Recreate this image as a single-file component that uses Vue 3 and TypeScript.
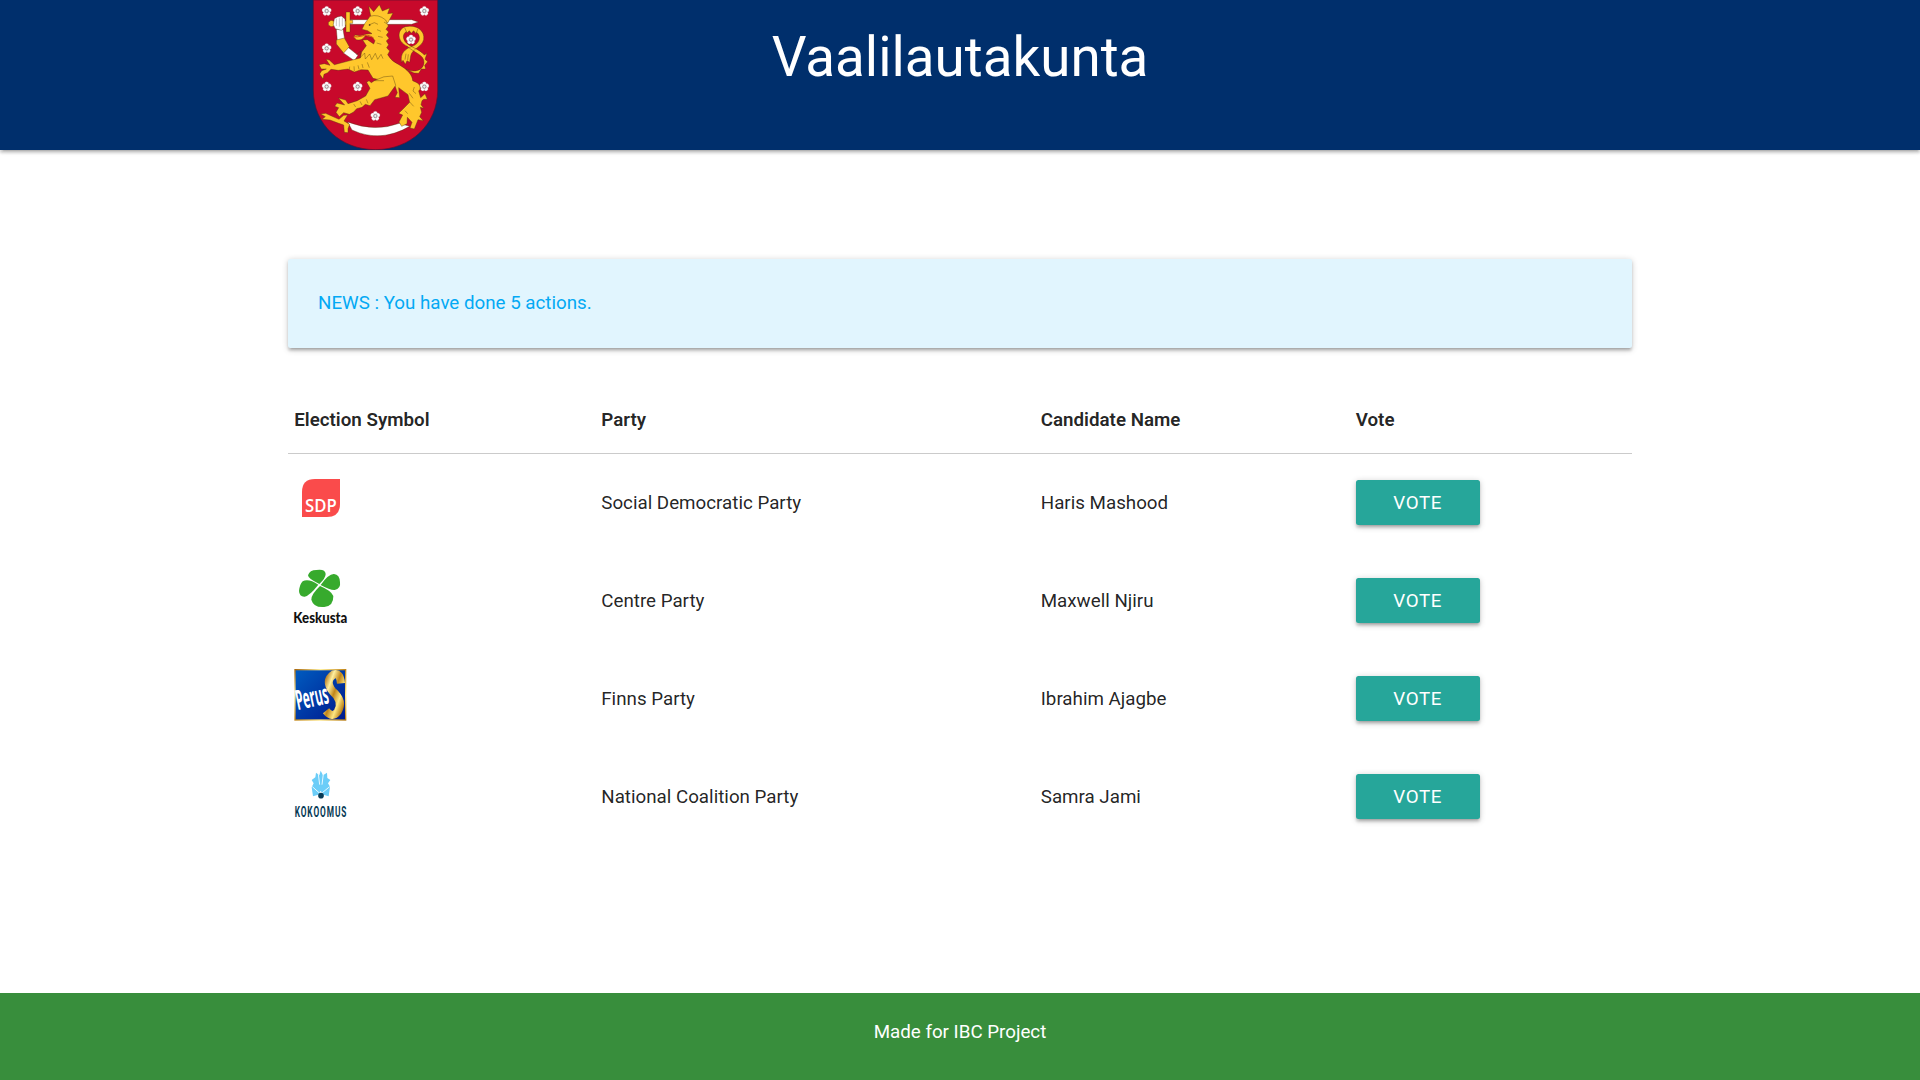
<script setup lang="ts">
interface Candidate {
  symbol: 'sdp' | 'keskusta' | 'perus' | 'kokoomus'
  party: string
  name: string
}

const candidates: Candidate[] = [
  { symbol: 'sdp', party: 'Social Democratic Party', name: 'Haris Mashood' },
  { symbol: 'keskusta', party: 'Centre Party', name: 'Maxwell Njiru' },
  { symbol: 'perus', party: 'Finns Party', name: 'Ibrahim Ajagbe' },
  { symbol: 'kokoomus', party: 'National Coalition Party', name: 'Samra Jami' },
]

const roses: [number, number][] = [
  [68, 33], [161, 33], [361, 33], [321, 119], [68, 145],
  [68, 260], [161, 260], [361, 260], [214, 348],
]
const petals = [0, 72, 144, 216, 288]
</script>

<template>
  <div class="page">
    <header class="banner">
      <svg class="arms" viewBox="0 0 420 450" aria-label="Coat of arms">
        <path d="M28 0H401V270C401 375 318 449 214.500 449S28 375 28 270Z" fill="#c8092b" stroke="#5b1030" stroke-width="2" />
        <g v-for="([x, y], i) in roses" :key="i" :transform="`translate(${x} ${y})`">
          <circle v-for="a in petals" :key="a" cx="0" cy="-8" r="6.500" :transform="`rotate(${a})`" fill="#fff" stroke="#a8707c" stroke-width=".8" />
          <circle r="8" fill="#f4eeee" />
          <circle r="5" fill="#eee" stroke="#77656a" stroke-width="2" />
        </g>
        <g stroke="#4d3810" stroke-width="1.200" stroke-linejoin="round">
          <path d="M137 59H323L343 66L323 73H137Z" fill="#fff" />
          <path d="M131 366Q212 397 286 370L317 379Q230 430 144 390Z" fill="#fff" />
          <path d="M97 88L117 87L122 118L100 122Z" fill="#fff" />
          <path d="M131 141L162 166L151 182L117 158Z" fill="#fff" />
          <g fill="#ffc72c">
            <path d="M73 67L81 61L91 64V78L81 80L73 75ZM118 63H127V75H118Z" />
            <path d="M126 36H138V61H146V70H138V96H126Z" />
            <path d="M97 120L121 114L136 140L119 159L97 132Z" />
          </g>
          <path d="M91 56L100 51L112 48L123 57L124 80L112 91L94 86L88 74Z" fill="#fff" />
          <path d="M97 56V78M106 53V80M115 54V79" fill="none" stroke="#777" />
          <g fill="#ffc72c">
            <path d="M305 207C329 219 358 213 360 188C361 164 331 159 310 139C278 125 278 87 305 80C335 73 364 90 359 119C354 141 323 147 320 168L317 187L309 182L304 193L297 181L293 187C287 160 304 146 325 139C348 131 352 108 338 97C320 84 293 94 299 116C304 139 345 144 361 165L369 160L363 178L371 185L362 196L365 207L352 207L344 220L330 219Z" />
            <path d="M302 83L309 99L316 92L322 100L329 92L336 101L342 86" />
            <path d="M199 43L194 18L209 35L226 14L235 33L257 24L251 41L267 39L252 68L202 57Z" />
            <path d="M182 71L198 49Q222 41 245 60L253 78L246 88L254 96L247 105L255 115L247 123L254 134L248 143L257 153L251 164Q262 184 285 194C311 209 325 225 326 242C337 248 351 250 348 268L344 273L350 293L363 281L370 298L359 298L354 302L351 314L359 325L349 322L353 337L347 350L358 362L342 359L331 387L318 384L324 367L310 352L309 371L293 379L285 366L296 345L284 340L295 329L317 307L312 284L284 263L287 293L273 292L280 278L273 258L240 242L207 235L192 210L171 209L151 216L132 207L103 211L81 208L71 218L60 223L57 237L47 222L53 212L67 207L52 207L45 194L61 191L78 196L66 178L76 180L91 194L130 184L169 174L173 156L187 137L176 120L190 119L209 132L213 122L205 112L184 107Q174 124 157 119L149 111L153 105L169 107L188 102L204 101L191 92L174 88Z" />
            <path d="M188 247L195 242L202 248L211 242Q240 226 266 228L275 256L252 288L212 299L198 317L184 313L174 322L158 326L149 336L136 343L119 338L106 350L96 337L104 323L92 319L99 309L122 315L103 294L125 300L132 311L160 302L185 288L198 265Z" />
            <path d="M50 342L65 340L76 345L105 358L119 346L131 345L120 363L137 373L132 386V398L121 397L119 375L104 370L78 360L54 358L64 350Z" />
          </g>
          <path d="M149 110Q160 112 174 108Q190 101 209 114" fill="none" stroke="#d84916" stroke-width="3" />
          <path d="M194 75L211 68L222 73M157 164L170 153L168 173L182 159L184 177L197 162L203 179L214 160L221 178L231 163L237 176M219 89L231 94M222 109L236 112M218 129L232 133M137 200L136 209M150 199L151 213M162 196L165 208M174 192L177 204M190 187L196 203M211 242L240 242M149 312L155 321M168 304L174 315M187 298L192 310M331 261L327 273L336 281M316 280L327 295M317 306L329 319M303 332L311 341M240 66L249 72M306 161L303 179M313 163L311 180" fill="none" />
        </g>
        <circle cx="197" cy="75" r="2.500" fill="#382b16" />
      </svg>
      <h1>Vaalilautakunta</h1>
    </header>

    <main>
      <section class="news">NEWS : You have done 5 actions.</section>

      <table>
        <colgroup>
          <col class="c-symbol" /><col class="c-party" /><col class="c-name" /><col />
        </colgroup>
        <thead>
          <tr>
            <th>Election Symbol</th>
            <th>Party</th>
            <th>Candidate Name</th>
            <th>Vote</th>
          </tr>
        </thead>
        <tbody>
          <tr v-for="c in candidates" :key="c.symbol">
            <td>
              <svg v-if="c.symbol === 'sdp'" class="logo" viewBox="0 0 180 180">
                <path d="M24 63Q24 24 63 24H138V99Q138 138 99 138H24Z" fill="#fa4b4b" />
                <text x="33" y="122" textLength="95" lengthAdjust="spacingAndGlyphs" class="sdp">SDP</text>
              </svg>
              <svg v-else-if="c.symbol === 'keskusta'" class="logo" viewBox="0 21 180 180">
                <g fill="#37aa2d">
                  <path d="M76 66Q42 50 42 40Q47 24 67 24Q94 20 95 36Q95 48 76 66Z" />
                  <path d="M80 69Q104 35 120 36Q137 37 138 61Q141 80 122 84Q109 85 80 69Z" />
                  <path d="M73 68Q43 48 26 58Q17 67 15 87Q16 105 32 104Q47 101 73 68Z" />
                  <path d="M78 72Q112 86 118 102Q119 132 91 135Q59 138 52 113Q51 98 78 72Z" />
                </g>
                <text x="-2" y="183" textLength="162" lengthAdjust="spacingAndGlyphs" class="keskusta">Keskusta</text>
              </svg>
              <svg v-else-if="c.symbol === 'perus'" class="logo" viewBox="0 17 180 180">
                <defs>
                  <linearGradient id="gold" x1="0" y1="0" x2="1" y2="1">
                    <stop offset="0" stop-color="#a96a10" /><stop offset=".25" stop-color="#fff0a0" />
                    <stop offset=".5" stop-color="#c18519" /><stop offset=".75" stop-color="#ffe783" />
                    <stop offset="1" stop-color="#b5780d" />
                  </linearGradient>
                  <linearGradient id="blue" x1="0" y1="0" x2="1" y2="1">
                    <stop offset="0" stop-color="#005cc0" /><stop offset="1" stop-color="#00188c" />
                  </linearGradient>
                </defs>
                <rect x="3" y="25" width="152" height="151" fill="url(#blue)" stroke="url(#gold)" stroke-width="4" />
                <path d="M141 66Q138 32 119 39Q91 58 116 90Q150 119 131 151Q115 172 96 148" fill="none" stroke="url(#gold)" stroke-width="24" />
                <text transform="translate(11 146) rotate(-12) scale(1 1.650)" textLength="99" lengthAdjust="spacingAndGlyphs" class="perus">Perus</text>
              </svg>
              <svg v-else class="logo" viewBox="0 11 180 180">
                <path d="M80 28L87 42L99 34L100 50L109 56L102 66L108 76L104 105L88 100L80 88L73 100L57 105L53 78L59 66L53 56L64 48L66 34L76 42Z" fill="#6bcdf8" />
                <path d="M73 38L77 70M88 38L84 70M55 76L75 94M107 76L85 94" fill="none" stroke="#e8f9ff" stroke-width="3" />
                <circle cx="81" cy="103" r="8.500" fill="#073b56" />
                <text x="2" y="168" textLength="158" class="kokoomus" lengthAdjust="spacingAndGlyphs">KOKOOMUS</text>
              </svg>
            </td>
            <td>{{ c.party }}</td>
            <td>{{ c.name }}</td>
            <td><button type="button">VOTE</button></td>
          </tr>
        </tbody>
      </table>
    </main>

    <footer>Made for IBC Project</footer>
  </div>
</template>

<style>
body {
  margin: 0;
  background: #fff;
}
</style>

<style scoped>
.page {
  display: flex;
  flex-direction: column;
  height: 1080px;
  overflow: hidden;
  font-family: Roboto, sans-serif;
  font-size: 18.750px;
  line-height: 1.5;
  color: rgba(0, 0, 0, 0.87);
}
.banner {
  display: grid;
  grid-template-columns: 304px 1fr 304px;
  flex: none;
  height: 150px;
  background: #002f6c;
  color: #fff;
  box-shadow: 0 2.500px 2.500px 0 rgba(0, 0, 0, 0.14), 0 3.750px 1.250px -2.500px rgba(0, 0, 0, 0.12), 0 1.250px 6.250px 0 rgba(0, 0, 0, 0.2);
}
.arms {
  grid-area: 1 / 2;
  width: 140px;
  height: 150px;
}
h1 {
  grid-area: 1 / 1 / 2 / 4;
  margin: 26px 0 0;
  text-align: center;
  font-size: 54.750px;
  line-height: 62px;
  font-weight: 400;
}
main {
  flex: 1;
  width: 1344px;
  margin: 0 auto;
}
.news {
  box-sizing: border-box;
  height: 89px;
  margin-top: 109px;
  padding: 30px;
  border-radius: 2.500px;
  background: #e1f5fe;
  color: #03a9f4;
  box-shadow: 0 2.500px 2.500px 0 rgba(0, 0, 0, 0.14), 0 3.750px 1.250px -2.500px rgba(0, 0, 0, 0.12), 0 1.250px 6.250px 0 rgba(0, 0, 0, 0.2);
}
table {
  width: 100%;
  margin-top: 37px;
  table-layout: fixed;
  border-spacing: 0;
}
.c-symbol {
  width: 307px;
}
.c-party {
  width: 439.500px;
}
.c-name {
  width: 315px;
}
th {
  box-sizing: border-box;
  height: 69px;
  padding: 3px 6.250px 0;
  border-bottom: 1px solid #cbcbcb;
  text-align: left;
  font-weight: 600;
}
td {
  box-sizing: border-box;
  height: 98px;
  padding: 0 6.250px;
}
.logo {
  display: block;
  width: 60px;
  height: 60px;
  overflow: visible;
  transform: translateY(-2px);
}
button {
  display: block;
  width: 124px;
  height: 45px;
  margin-bottom: 1px;
  padding: 1px 0 0;
  border: 0;
  border-radius: 2.500px;
  background: #26a69a;
  color: #fff;
  font: 400 18.750px/44px Roboto, sans-serif;
  letter-spacing: 0.625px;
  box-shadow: 0 2.500px 2.500px 0 rgba(0, 0, 0, 0.14), 0 3.750px 1.250px -2.500px rgba(0, 0, 0, 0.12), 0 1.250px 6.250px 0 rgba(0, 0, 0, 0.2);
}
footer {
  box-sizing: border-box;
  flex: none;
  height: 87px;
  padding-top: 25px;
  background: #388e3c;
  color: #fff;
  text-align: center;
}
.sdp {
  font: 600 53px "Open Sans", sans-serif;
  fill: #fff;
}
.keskusta {
  font: 900 43px Lato, sans-serif;
  fill: #111;
}
.perus {
  font: 700 50px "Open Sans", sans-serif;
  fill: #fff;
}
.kokoomus {
  font: 700 45px Roboto, sans-serif;
  letter-spacing: 5px;
  fill: #073b56;
}
</style>
